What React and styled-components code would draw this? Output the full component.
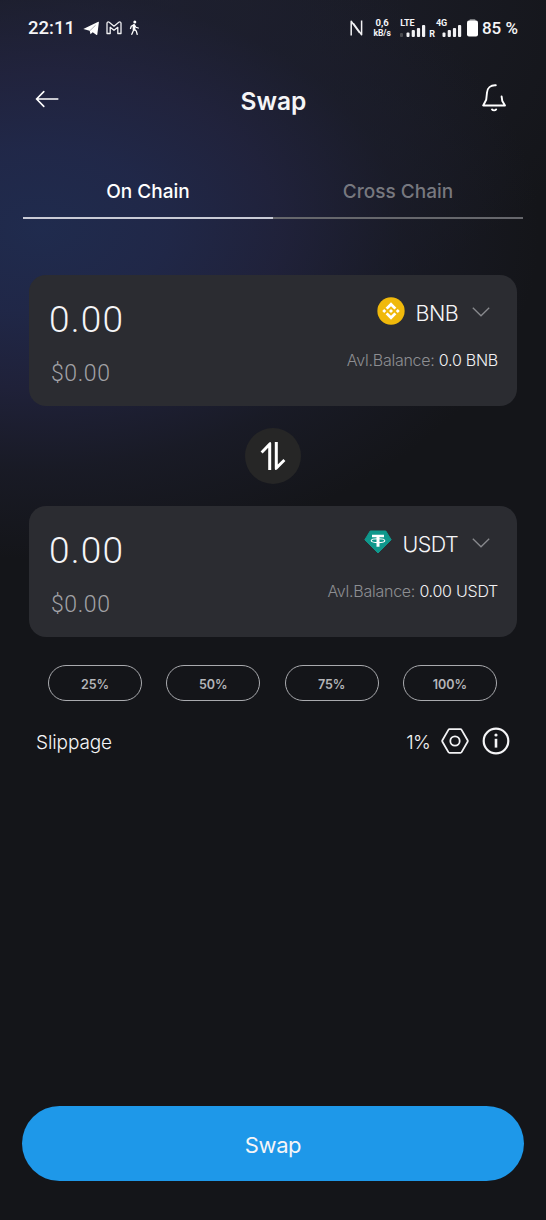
import styled, { createGlobalStyle } from "styled-components";

const percents = ["25%", "50%", "75%", "100%"];

function SignalBars({ dim }) {
  return (
    <svg width="26" height="13" viewBox="0 0 26 13" fill="#f2f2f4">
      <rect x="0" y="9" width="3" height="4" rx="1" fill={dim ? "#4b4c50" : "none"} />
      <rect x="6.5" y="8.5" width="3" height="4.5" rx="1" />
      <rect x="11.7" y="6" width="3.2" height="7" rx="1" />
      <rect x="16.9" y="4" width="3.2" height="9" rx="1" />
      <rect x="22" y="1" width="3.2" height="12" rx="1" />
    </svg>
  );
}

function BnbIcon() {
  return (
    <svg width="28" height="28" viewBox="0 0 32 32">
      <circle cx="16" cy="16" r="15.6" fill="#f0b90b" />
      <path
        fill="#fff"
        d="M12.116 14.404L16 10.52l3.886 3.886 2.26-2.26L16 6l-6.144 6.144 2.26 2.26zM6 16l2.26-2.26L10.52 16l-2.26 2.26L6 16zm6.116 1.596L16 21.48l3.886-3.886 2.26 2.259L16 26l-6.144-6.144-.003-.003 2.263-2.257zM21.48 16l2.26-2.26L26 16l-2.26 2.26L21.48 16zm-3.188-.002h.002V16L16 18.294l-2.291-2.29-.004-.004.004-.003.401-.402.195-.195L16 13.706l2.293 2.293z"
      />
    </svg>
  );
}

function UsdtIcon() {
  return (
    <svg width="28" height="24" viewBox="0 0 28 24">
      <path d="M6.2 1h15.6l5.4 8.8L14 23 .8 9.8z" fill="#0f988c" stroke="#0f988c" strokeLinejoin="round" />
      <path d="M8 4.7h12v2.6h-4.5v9.5h-3V7.3H8z" fill="#fff" />
      <ellipse cx="14" cy="10.7" rx="6.8" ry="1.9" fill="none" stroke="#fff" strokeWidth="1.1" />
    </svg>
  );
}

function TokenCard({ icon, symbol, balance }) {
  return (
    <Card>
      <Amounts>
        <Amount>0.00</Amount>
        <Fiat>$0.00</Fiat>
      </Amounts>
      <TokenSide>
        <TokenSelect>
          {icon}
          <Symbol>{symbol}</Symbol>
          <Chevron width="18" height="10" viewBox="0 0 18 10" fill="none" stroke="#898a8e" strokeWidth="1.3">
            <path d="M.8.8L9 8.8 17.2.8" />
          </Chevron>
        </TokenSelect>
        <Balance>
          Avl.Balance: <span>{balance}</span>
        </Balance>
      </TokenSide>
    </Card>
  );
}

function App() {
  return (
    <Screen>
      <GlobalStyle />
      <StatusBar>
        <StatusLeft>
          <Clock>22:11</Clock>
          <svg width="17" height="16" viewBox="0 0 17 16" fill="#fff">
            <path d="M.3 9L15.3 1.7Q16 1.5 15.9 2.3L14.3 14.4Q14 15.3 13.2 14.8L9.7 12.2 7.5 14.3 6.7 10.8z" />
            <path d="M7 10.600L12.600 5.200" stroke="#55576a" strokeWidth=".5" />
          </svg>
          <svg width="16" height="14" viewBox="0 0 16 14" fill="none" stroke="#f2f2f4" strokeWidth="1.3" strokeLinejoin="round">
            <path d="M1 12.5V2.3C1 .9 2.3.6 3.2 1.3L8 5.2l4.8-3.900C13.7.6 15 .9 15 2.3v10.200h-3.200V6.300L8 9.300 4.200 6.300v6.200z" />
          </svg>
          <Walker width="11" height="16" viewBox="0 0 11 16" fill="none" stroke="#fff" strokeWidth="1.3" strokeLinecap="round">
            <circle cx="5.8" cy="2" r="1.5" fill="#fff" stroke="none" />
            <path d="M5 5v4.200L2.800 14.300M5.300 9.200l2 1.800.9 3.400M1.500 8.500L2.300 6.200 5 4.800 7 7.300 9.300 8" />
            <path d="M5 5.500v4" strokeWidth="2.700" />
          </Walker>
        </StatusLeft>
        <StatusRight>
          <svg width="13" height="18" viewBox="0 0 13 18" fill="none" stroke="#f2f2f4" strokeWidth="1.5" strokeLinejoin="round">
            <path d="M1.200 16.500V2.300l8.400 11.500M11.600 1.500v14.200L3.400 4.500" />
          </svg>
          <NetSpeed>
            <b>0,6</b>
            <b>kB/s</b>
          </NetSpeed>
          <Network>
            <NetLabel>LTE</NetLabel>
            <SignalBars dim />
          </Network>
          <Roaming>R</Roaming>
          <Network>
            <NetLabel>4G</NetLabel>
            <SignalBars />
          </Network>
          <BatteryIcon width="11" height="18" viewBox="0 0 11 18">
            <rect x="2.5" y="0" width="6" height="3" rx="1" fill="#77797d" />
            <rect x="0" y="1.5" width="11" height="16" rx="2" fill="#fff" />
          </BatteryIcon>
          <Battery>85 %</Battery>
        </StatusRight>
      </StatusBar>

      <Header>
        <IconButton aria-label="Back">
          <svg width="24" height="18" viewBox="0 0 24 18" fill="none" stroke="#fff" strokeWidth="1.6" strokeLinecap="round">
            <path d="M22.800 9H1.800M8.800 1.600L1.600 9l7.200 7.400" />
          </svg>
        </IconButton>
        <Title>Swap</Title>
        <BellButton aria-label="Notifications">
          <svg width="24" height="28" viewBox="0 0 24 28" fill="none" stroke="#fff" strokeWidth="1.9" strokeLinecap="round" strokeLinejoin="round">
            <path d="M13.800 1.300C8.500 1 5.300 4.200 5 8.500L4.200 15.800 1.200 21.500H23L20.300 17 19.600 12.500" />
            <path d="M10 25.400c1 1.300 3.200 1.300 4.200 0" />
          </svg>
        </BellButton>
      </Header>

      <Tabs>
        <Tab $active>On Chain</Tab>
        <Tab>Cross Chain</Tab>
      </Tabs>

      <Cards>
        <TokenCard icon={<BnbIcon />} symbol="BNB" balance="0.0 BNB" />
        <SwitchButton aria-label="Switch tokens">
          <svg width="26" height="30" viewBox="0 0 26 30" fill="#fff">
            <path d="M8.200 29V6.800L2.600 12.600.6 10.600 9.200 1.400Q11.200.2 11.200 2.600V29z" />
            <path d="M14.800 1H17.800V23.400L23.400 18 25.400 20 17 28.600Q14.800 29.800 14.800 27.400z" />
          </svg>
        </SwitchButton>
        <TokenCard icon={<UsdtIcon />} symbol="USDT" balance="0.00 USDT" />
      </Cards>

      <Percents>
        {percents.map((value) => (
          <Percent key={value}>{value}</Percent>
        ))}
      </Percents>

      <Slippage>
        <SlippageLabel>Slippage</SlippageLabel>
        <SlippageValue>1%</SlippageValue>
        <svg width="28" height="26" viewBox="0 0 28 26" fill="none" stroke="#f2f2f4" strokeWidth="1.8" strokeLinejoin="round">
          <path d="M8.600 1.200h10.800q.8 0 1.200.7L26.600 12.200q.4.800 0 1.600L20.600 24.100q-.4.700-1.200.7H8.600q-.8 0-1.200-.7L1.400 13.800q-.4-.8 0-1.600L7.400 1.900q.4-.7 1.200-.7z" />
          <circle cx="14" cy="13" r="4.700" />
        </svg>
        <svg width="28" height="28" viewBox="0 0 28 28" fill="none" stroke="#f5f5f7" strokeWidth="2.2">
          <circle cx="14" cy="14" r="12.300" />
          <path d="M14 11.800v8.800" strokeWidth="2.600" />
          <circle cx="14" cy="8" r="1.600" fill="#f5f5f7" stroke="none" />
        </svg>
      </Slippage>

      <SwapButton>Swap</SwapButton>
    </Screen>
  );
}

const GlobalStyle = createGlobalStyle`
  * {
    box-sizing: border-box;
  }

  body {
    margin: 0;
    background: #141519;
  }

  button {
    padding: 0;
    border: 0;
    background: none;
    color: inherit;
    font: inherit;
  }

  svg {
    display: block;
    flex: none;
  }
`;

const Screen = styled.div`
  display: flex;
  flex-direction: column;
  width: 546px;
  height: 1220px;
  overflow: hidden;
  color: #f5f5f7;
  font-family: Inter, sans-serif;
  background:
    radial-gradient(
      ellipse 500px 330px at 40px 230px,
      rgba(32, 44, 80, 0.95) 0%,
      rgba(33, 41, 76, 0.9) 25%,
      rgba(34, 36, 65, 0.8) 48%,
      rgba(28, 30, 46, 0.6) 72%,
      rgba(20, 21, 25, 0) 100%
    ),
    radial-gradient(ellipse 540px 340px at 100px 0, rgba(34, 36, 54, 0.85), rgba(20, 21, 25, 0)),
    #141519;
`;

const StatusBar = styled.div`
  display: flex;
  justify-content: space-between;
  align-items: center;
  height: 56px;
  padding: 0 28px;
  font-family: Roboto, sans-serif;
`;

const StatusLeft = styled.div`
  display: flex;
  align-items: center;
  gap: 6px;
`;

const Clock = styled.span`
  width: 49px;
  font-size: 18.5px;
  font-weight: 500;
`;

const Walker = styled.svg`
  margin-left: 1px;
`;

const StatusRight = styled.div`
  display: flex;
  align-items: center;
`;

const NetSpeed = styled.div`
  display: flex;
  flex-direction: column;
  align-items: center;
  width: 20px;
  margin: 0 8px 0 9px;
  font-size: 8.5px;
  line-height: 10px;

  b:first-child {
    font-size: 9.5px;
  }
`;

const Network = styled.div`
  position: relative;
  display: flex;
  align-items: flex-end;
  width: 26px;
  height: 18px;
`;

const NetLabel = styled.b`
  position: absolute;
  top: -1px;
  left: 0;
  font-size: 9px;
  line-height: 10px;
`;

const Roaming = styled.b`
  align-self: flex-end;
  margin: 0 1px 0 3px;
  font-size: 9px;
  line-height: 8px;
`;

const BatteryIcon = styled.svg`
  margin-left: 5px;
`;

const Battery = styled.span`
  margin-left: 4px;
  font-size: 17px;
  font-weight: 500;
`;

const Header = styled.header`
  display: flex;
  justify-content: space-between;
  align-items: center;
  height: 88px;
  padding: 0 40px 4px 35px;
`;

const IconButton = styled.button`
  display: flex;
  padding-top: 1px;
`;

const BellButton = styled(IconButton)`
  padding: 0 0 1px;
`;

const Title = styled.h1`
  margin: 6px 0 0 6px;
  font-size: 24.5px;
  font-weight: 600;
  line-height: 30px;
`;

const Tabs = styled.nav`
  display: flex;
  height: 75px;
  margin: 0 23px;
`;

const Tab = styled.button`
  flex: 1;
  padding-top: 22px;
  border-bottom: 2px solid ${(props) => (props.$active ? "#c9cbd6" : "#66676c")};
  color: ${(props) => (props.$active ? "#fff" : "#77787f")};
  font-size: 19px;
  font-weight: 450;
`;

const Cards = styled.main`
  display: flex;
  flex-direction: column;
  align-items: center;
  gap: 22px;
  padding: 56px 29px 0;
`;

const Card = styled.section`
  display: flex;
  justify-content: space-between;
  width: 488px;
  height: 131px;
  padding: 0 19px 0 20px;
  border-radius: 17px;
  background: #2b2c31;
`;

const Amounts = styled.div`
  display: flex;
  flex-direction: column;
  font-family: Roboto, sans-serif;
`;

const Amount = styled.span`
  margin-top: 22px;
  font-size: 37px;
  font-weight: 350;
  line-height: 46px;
  letter-spacing: 1.2px;
`;

const Fiat = styled.span`
  margin: 17px 0 0 2px;
  color: #a2a3a7;
  font-size: 23px;
  font-weight: 300;
  line-height: 28px;
  letter-spacing: 0.6px;
`;

const TokenSide = styled.div`
  display: flex;
  flex-direction: column;
  align-items: flex-end;
`;

const TokenSelect = styled.div`
  display: flex;
  align-items: center;
  height: 30px;
  margin: 21px 8px 0 0;
`;

const Symbol = styled.span`
  margin: 3px 14px 0 11px;
  font-size: 21.5px;
  font-weight: 350;
  letter-spacing: -0.6px;
`;

const Chevron = styled.svg`
  margin-top: 2px;
`;

const Balance = styled.div`
  margin-top: 24px;
  color: #8d8e92;
  font-size: 16px;
  font-weight: 300;
  line-height: 20px;
  letter-spacing: -0.25px;

  span {
    color: #f2f2f4;
    font-weight: 350;
  }
`;

const SwitchButton = styled.button`
  display: flex;
  justify-content: center;
  align-items: center;
  width: 56px;
  height: 56px;
  border-radius: 50%;
  background: #262626;
`;

const Percents = styled.div`
  display: flex;
  justify-content: space-between;
  margin: 28px 49px 0 48px;
`;

const Percent = styled.button`
  width: 94px;
  height: 36px;
  padding-top: 2px;
  border: 1.5px solid #a9aaae;
  border-radius: 18px;
  color: #b4b5b9;
  font-size: 12.5px;
  font-weight: 600;
`;

const Slippage = styled.div`
  display: flex;
  align-items: center;
  height: 30px;
  margin: 25px 36px 0;
  font-size: 19px;
  font-weight: 350;
  letter-spacing: -0.1px;

  svg + svg {
    margin-left: 13px;
  }
`;

const SlippageLabel = styled.span`
  margin-right: auto;
  padding-top: 3px;
`;

const SlippageValue = styled.span`
  margin-right: 11px;
  padding-top: 3px;
  letter-spacing: -0.8px;
`;

const SwapButton = styled.button`
  height: 75px;
  margin: auto 22px 39px;
  padding-top: 3px;
  border-radius: 38px;
  background: #1e98e9;
  font-size: 22px;
  letter-spacing: -0.4px;
`;

export default App;
